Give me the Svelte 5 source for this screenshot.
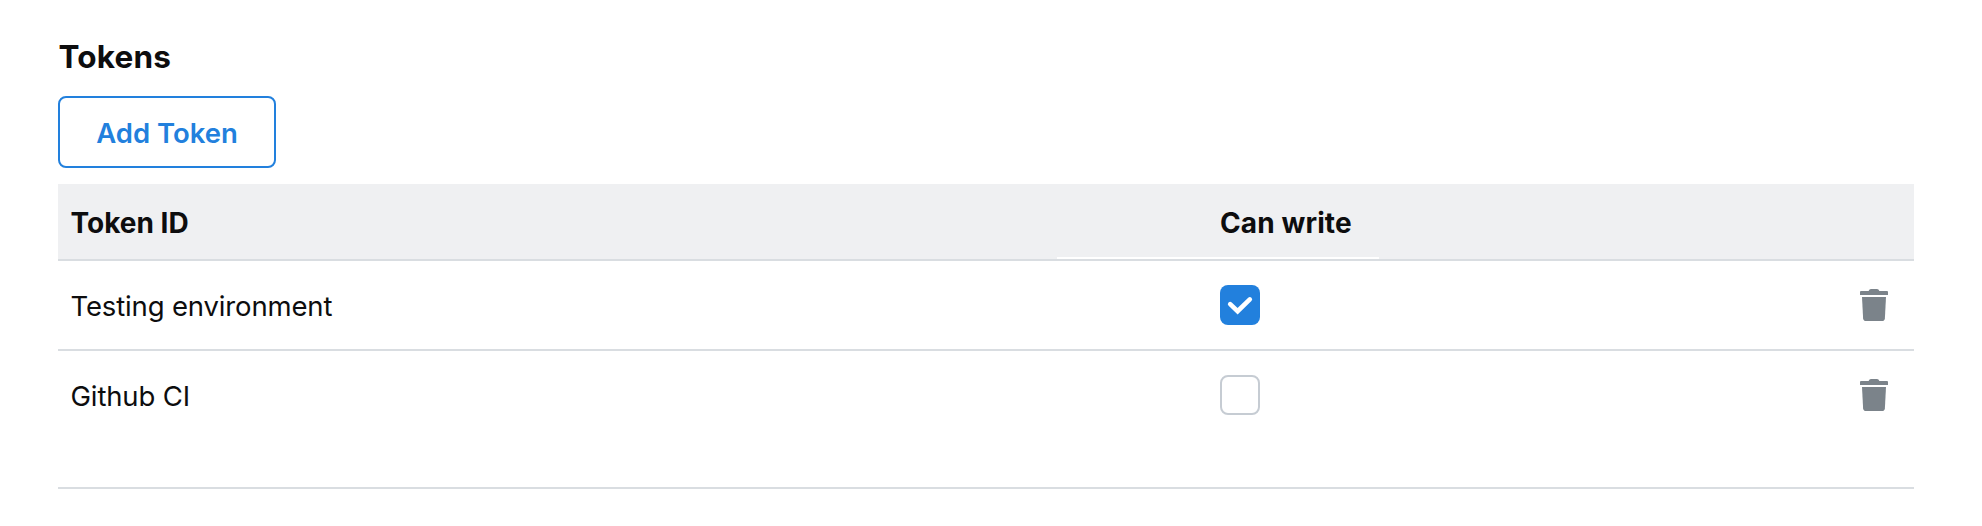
<script>
  let tokens = $state([
    { id: 'Testing environment', canWrite: true },
    { id: 'Github CI', canWrite: false },
  ]);
</script>

<section class="tokens">
  <h2>Tokens</h2>
  <button class="add" type="button">Add Token</button>

  <div class="table">
    <div class="row head">
      <div class="name">Token ID</div>
      <div>Can write</div>
      <div class="strip"></div>
    </div>
    {#each tokens as token}
      <div class="row">
        <div class="name">{token.id}</div>
        <div>
          <button
            class="check"
            class:checked={token.canWrite}
            type="button"
            role="checkbox"
            aria-checked={token.canWrite}
            aria-label="Can write"
            onclick={() => (token.canWrite = !token.canWrite)}
          >
            {#if token.canWrite}
              <svg width="40" height="40" viewBox="0 0 40 40">
                <path d="M10.2 19.2 L17.6 26.2 L29.8 14.4" />
              </svg>
            {/if}
          </button>
        </div>
        <button class="delete" type="button" aria-label="Delete">
          <svg width="28" height="32" viewBox="0 0 28 32">
            <path d="M1 2H8.6Q9.3 0 11 0H17Q18.7 0 19.4 2H27Q28 2 28 3V6H0V3Q0 2 1 2Z" />
            <path d="M2 8H26L24.9 29.2Q24.7 32 22 32H6Q3.3 32 3.1 29.2Z" />
          </svg>
        </button>
      </div>
    {/each}
  </div>
</section>

<style>
  :global(body) {
    margin: 0;
    background: #fff;
  }

  .tokens {
    box-sizing: border-box;
    height: 526px;
    padding: 38px 68px 0 58px;
    font-family: Inter, sans-serif;
    font-size: 27.5px;
    line-height: 40px;
    color: #0d0d0e;
  }

  h2 {
    margin: 0;
    height: 58px;
    padding-left: 0.5px;
    font-size: 31.5px;
    line-height: 38px;
    font-weight: 700;
    letter-spacing: 0.2px;
  }

  button {
    padding: 0;
    font: inherit;
    background: none;
    border: 0;
  }

  .add {
    box-sizing: border-box;
    display: flex;
    align-items: center;
    justify-content: center;
    width: 218px;
    height: 72px;
    padding-top: 2px;
    border: 2px solid #2280dd;
    border-radius: 8px;
    color: #2280dd;
    font-weight: 600;
  }

  .table {
    height: 303px;
    margin-top: 16px;
    border-bottom: 2px solid #d9dde1;
  }

  .row {
    box-sizing: border-box;
    display: grid;
    grid-template-columns: 1162px 1fr 28px;
    align-items: center;
    height: 90px;
    padding-right: 26px;
    border-bottom: 2px solid #d9dde1;
  }

  .row:last-child {
    border-bottom-color: transparent;
  }

  .head {
    position: relative;
    height: 77px;
    padding-top: 2px;
    background: #eff0f2;
    font-size: 28px;
    font-weight: 700;
    letter-spacing: 0.12px;
  }

  .name {
    padding: 2px 0 0 12.5px;
    letter-spacing: -0.15px;
  }

  .head .name {
    padding-top: 0;
    letter-spacing: 0;
  }

  .strip {
    position: absolute;
    left: 999px;
    bottom: 0;
    width: 322px;
    height: 2px;
    background: #fff;
  }

  .check {
    box-sizing: border-box;
    display: block;
    width: 40px;
    height: 40px;
    border: 2px solid #c6ccd3;
    border-radius: 8px;
  }

  .check.checked {
    border: 0;
    background: #2280dd;
  }

  svg {
    display: block;
  }

  .check path {
    fill: none;
    stroke: #fff;
    stroke-width: 4.6;
    stroke-linecap: round;
    stroke-linejoin: miter;
  }

  .delete {
    display: block;
    fill: #7b838a;
  }
</style>
